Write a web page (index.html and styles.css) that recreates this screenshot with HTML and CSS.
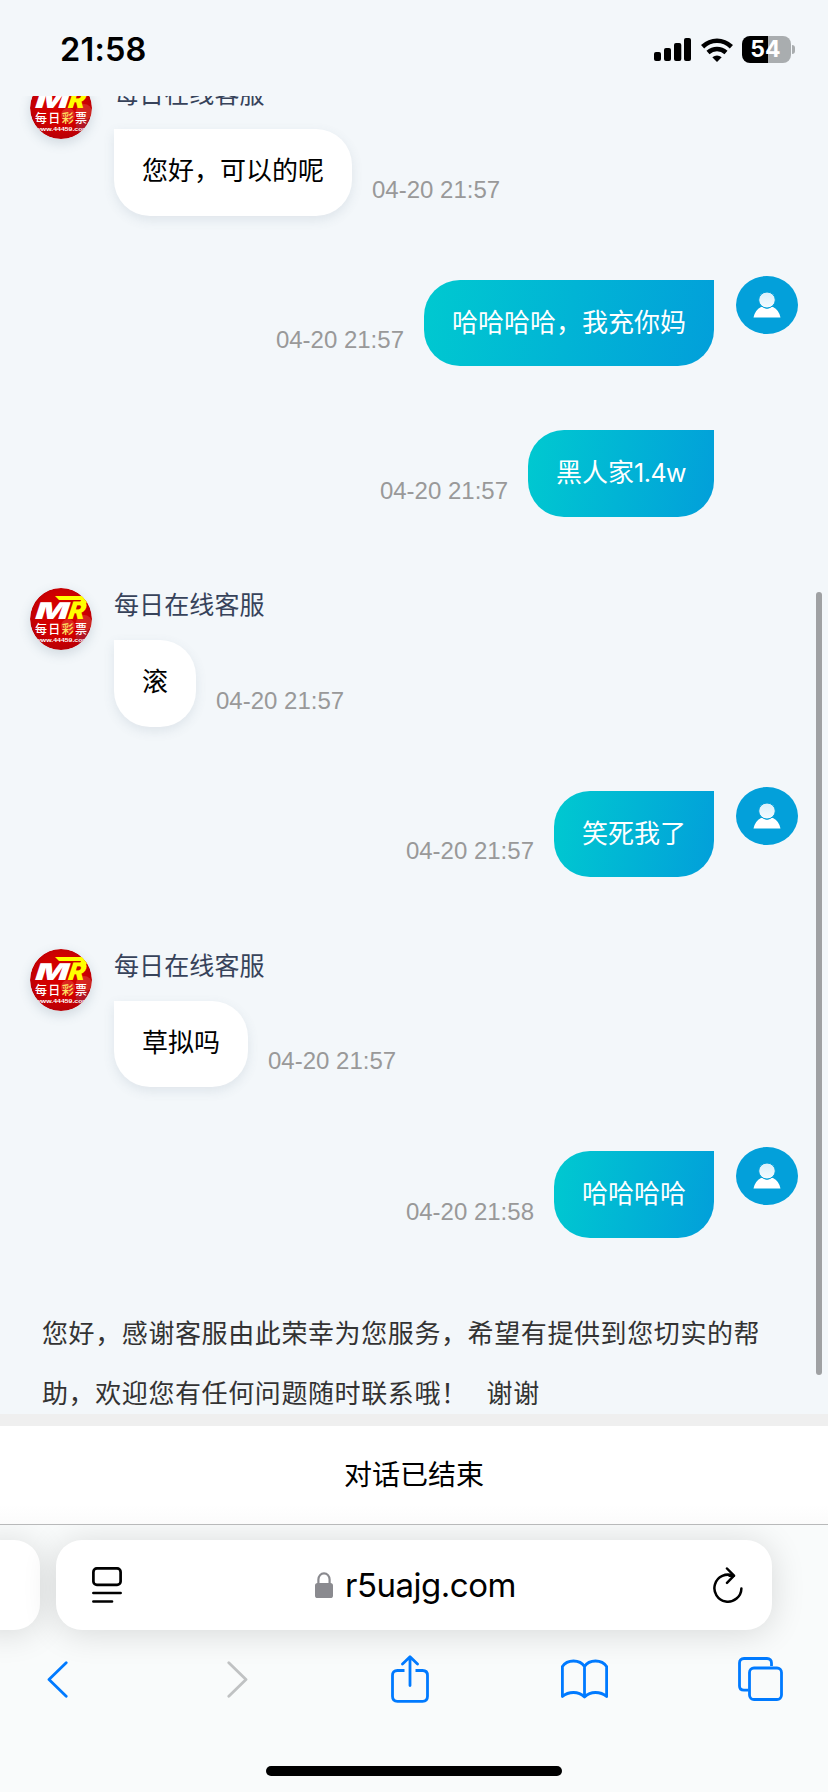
FILE: index.html
```html
<!DOCTYPE html>
<html lang="zh-CN">
<head>
<meta charset="utf-8">
<title>每日在线客服</title>
<link rel="stylesheet" href="styles.css">
</head>
<body>
<svg class="defs" width="0" height="0" aria-hidden="true">
  <defs>
    <radialGradient id="red" cx="50%" cy="45%" r="60%">
      <stop offset="0" stop-color="#d80000"/>
      <stop offset="0.6" stop-color="#d00000"/>
      <stop offset="1" stop-color="#b00008"/>
    </radialGradient>
    <linearGradient id="head" x1="0" y1="0" x2="0" y2="1">
      <stop offset="0" stop-color="#d9effa"/>
      <stop offset="1" stop-color="#f4fbff"/>
    </linearGradient>
    <clipPath id="disc"><circle cx="31" cy="31" r="31"/></clipPath>
    <symbol id="brand" viewBox="0 0 62 62">
      <g clip-path="url(#disc)">
        <rect width="62" height="62" fill="url(#red)"/>
        <circle cx="38" cy="38" r="7" fill="#e8604f" opacity=".4"/>
        <circle cx="54" cy="35" r="8" fill="#e86a5a" opacity=".35"/>
        <circle cx="54" cy="49" r="8" fill="#a03050" opacity=".45"/>
        <text class="mark" transform="translate(36.500 31) skewX(-18) scale(1.050 1)" font-size="24" fill="#ff0">R</text>
        <path d="M25 8H52Q60 9 57 14L55 17H49L51 12H29Z" fill="#ff0"/>
        <text class="mark" transform="translate(3.500 31) skewX(-18) scale(1.520 1)" font-size="23" fill="#fff">M</text>
        <text class="cjk" x="5" y="46" font-size="12" textLength="52" fill="#fff">每日<tspan fill="#ffe060">彩</tspan>票</text>
        <text class="site" x="5.500" y="54" font-size="6.200" textLength="53" lengthAdjust="spacingAndGlyphs" fill="#fff">www.44459.com</text>
      </g>
    </symbol>
    <symbol id="user" viewBox="0 0 62 58">
      <ellipse cx="31" cy="29" rx="31" ry="29" fill="#03a0da"/>
      <path d="M17.500 41.500Q19 34 25 31H26.500Q31 34.500 35.500 31H37Q43 34 44.500 41.500Z" fill="#fff"/>
      <ellipse cx="31" cy="24" rx="8.300" ry="8" fill="url(#head)" stroke="#03a0da" stroke-width="1"/>
    </symbol>
  </defs>
</svg>

<div class="screen">
  <header class="status">
    <span class="clock">21:58</span>
    <div class="status-icons">
      <svg class="signal" width="37" height="24" viewBox="0 0 37 24"><rect x="0" y="14" width="7" height="9" rx="2"/><rect x="10" y="10" width="7" height="13" rx="2"/><rect x="20" y="5" width="7.300" height="18" rx="2"/><rect x="30" y="0" width="7" height="23" rx="2"/></svg>
      <svg class="wifi" width="32" height="24" viewBox="0 0 32 24" fill="none" stroke="#000" stroke-width="4.600"><path d="M1.600 8.700Q8 2.700 16 2.700T30.400 8.700"/><path d="M7 14.500Q11 11 16 11T25 14.500"/><path d="M16 24L11.300 19.300Q16 15.600 20.700 19.300Z" fill="#000" stroke="none"/></svg>
      <div class="battery"><span>54</span></div>
      <i class="nub"></i>
    </div>
  </header>

  <main class="chat">
    <div class="row agent first">
      <svg class="brand"><use href="#brand"/></svg>
      <div class="body"><div class="name">每日在线客服</div>
        <div class="line"><div class="bubble">您好，可以的呢</div><time>04-20 21:57</time></div></div>
    </div>
    <div class="row guest"><time>04-20 21:57</time><div class="bubble">哈哈哈哈，我充你妈</div><svg class="user"><use href="#user"/></svg></div>
    <div class="row guest"><time>04-20 21:57</time><div class="bubble">黑人家<span class="latin">1.4w</span></div><span class="user"></span></div>
    <div class="row agent">
      <svg class="brand"><use href="#brand"/></svg>
      <div class="body"><div class="name">每日在线客服</div>
        <div class="line"><div class="bubble">滚</div><time>04-20 21:57</time></div></div>
    </div>
    <div class="row guest"><time>04-20 21:57</time><div class="bubble">笑死我了</div><svg class="user"><use href="#user"/></svg></div>
    <div class="row agent">
      <svg class="brand"><use href="#brand"/></svg>
      <div class="body"><div class="name">每日在线客服</div>
        <div class="line"><div class="bubble">草拟吗</div><time>04-20 21:57</time></div></div>
    </div>
    <div class="row guest"><time>04-20 21:58</time><div class="bubble">哈哈哈哈</div><svg class="user"><use href="#user"/></svg></div>
    <p class="notice">您好，感谢客服由此荣幸为您服务，希望有提供到您切实的帮<br>助，欢迎您有任何问题随时联系哦！<span class="thanks">谢谢</span></p>
    <i class="scrollbar"></i>
  </main>

  <div class="ended">对话已结束</div>

  <footer class="browser">
    <div class="tabs">
      <div class="prev-tab"></div>
      <div class="address">
        <svg width="30" height="36" viewBox="0 0 30 36" fill="none" stroke="#000" stroke-width="2.700" stroke-linecap="round"><rect x="1.400" y="1.400" width="27.200" height="16.500" rx="3.500"/><path d="M1.400 26H28.600M1.400 34.500H20"/></svg>
        <div class="host">
          <svg width="18" height="26" viewBox="0 0 18 26"><path d="M3.400 12V7.500a5.600 6.200 0 0 1 11.200 0V12" fill="none" stroke="#8a8a8f" stroke-width="2.200"/><rect y="11" width="18" height="15" rx="2.600" fill="#8a8a8f"/></svg>
          <span>r5uajg.com</span>
        </div>
        <svg width="30" height="37" viewBox="0 0 30 37" fill="none" stroke="#000" stroke-width="2.500" stroke-linecap="round" stroke-linejoin="round"><path d="M28.400 21.500A13.500 13.500 0 1 1 20.500 8.900"/><path d="M14 1.500L21 8.700L14 15.800M21 8.700H16.500"/></svg>
      </div>
    </div>
    <nav class="tools">
      <svg width="21" height="37" viewBox="0 0 21 37"><path d="M19.200 1.800L2 18.500L19.200 35.200"/></svg>
      <svg class="off" width="21" height="37" viewBox="0 0 21 37"><path d="M1.800 1.800L19 18.500L1.800 35.200"/></svg>
      <svg width="38" height="48" viewBox="0 0 38 48"><path d="M13.500 15.500H6.500Q1.500 15.500 1.500 20.500V41.300Q1.500 46.300 6.500 46.300H31.500Q36.500 46.300 36.500 41.300V20.500Q36.500 15.500 31.500 15.500H24.500" stroke-linecap="butt"/><path d="M19 30.500V2M11.500 9L19 1.800L26.500 9"/></svg>
      <svg width="47" height="40" viewBox="0 0 47 40"><path d="M23.500 37.500V7.500Q20 2 12.500 2T1.400 7.500V37.500Q6 33.500 12.500 33.500T23.500 38Q28 33.500 34.500 33.500T45.600 37.500V7.500Q42 2 34.500 2T23.500 7.500"/></svg>
      <svg width="45" height="44" viewBox="0 0 45 44"><path d="M33.500 9V6Q33.500 1.500 29 1.500H6Q1.500 1.500 1.500 6V29Q1.500 33.200 6 33.200H10.500" stroke-linecap="butt"/><rect x="11.500" y="11" width="32" height="31.500" rx="4.500"/></svg>
    </nav>
    <div class="home"></div>
  </footer>
</div>
</body>
</html>
```
FILE: styles.css
```css
* { box-sizing: border-box; }
body { margin: 0; background: #f3f7fa; }
svg { display: block; flex: none; }
.defs { position: absolute; }

.screen {
  width: 828px;
  height: 1792px;
  display: flex;
  flex-direction: column;
  overflow: hidden;
  font-family: "Liberation Sans", "Noto Sans CJK SC", sans-serif;
}

/* Status bar */
.status {
  height: 96px;
  flex: none;
  display: flex;
  justify-content: space-between;
  align-items: center;
  padding: 3px 33px 0 60px;
}
.clock { font: 600 32.5px/40px Inter, sans-serif; padding-top: 1px; letter-spacing: .2px; }
.status-icons { display: flex; align-items: center; }
.wifi { margin: 0 9px 0 10px; }
.battery {
  width: 49px;
  height: 27px;
  border-radius: 8px;
  background: linear-gradient(90deg, #000 0 26px, #a9adaf 26px);
  color: #fff;
  font: 700 23px/27px Inter, sans-serif;
  text-align: center;
  padding-right: 2px;
}
.nub { width: 3px; height: 9px; margin-left: 1px; border-radius: 0 4px 4px 0; background: #a9adaf; }

/* Conversation */
.chat { position: relative; height: 1318px; flex: none; overflow: hidden; }
.row { display: flex; margin-top: 64px; }
.agent { margin-top: 71.8px; padding-left: 30px; }
.agent.first { margin-top: -18.6px; }
.guest { justify-content: flex-end; padding-right: 30px; }
.brand { width: 62px; height: 62px; border-radius: 50%; box-shadow: 0 4px 12px rgba(70, 100, 120, .2); }
.body { margin-left: 22px; }
.name { height: 52px; padding-top: 1px; font-size: 25px; letter-spacing: .1px; line-height: 32px; color: #37435a; }
.line { display: flex; }
.bubble {
  height: 86.4px;
  padding: 0 28px;
  font-size: 26px;
  line-height: 85px;
  white-space: nowrap;
}
.agent .bubble {
  background: #fff;
  color: #000;
  border-radius: 0 36px 36px 36px;
  box-shadow: 0 4px 12px rgba(70, 100, 120, .12);
}
.guest .bubble {
  background: linear-gradient(100deg, #00c9d0, #029fda);
  color: #fff;
  line-height: 86px;
  border-radius: 36px 0 36px 36px;
}
.latin { font-family: Inter, sans-serif; font-size: 25px; letter-spacing: -.5px; }
time { align-self: flex-end; margin: 0 20px 12px; font-size: 24px; line-height: 28px; color: #999; white-space: nowrap; }
.user { width: 62px; height: 58px; margin: -4px 0 0 22px; flex: none; }
.mark { font-family: Inter, sans-serif; font-weight: 900; }
.cjk { font-family: "Noto Sans CJK SC", sans-serif; font-weight: 500; }
.site { font-family: "Liberation Sans", sans-serif; font-weight: 700; }
.notice {
  margin: 66px 0 0 42px;
  font-size: 26px;
  letter-spacing: .6px;
  line-height: 60px;
  color: #333;
  white-space: nowrap;
}
.thanks { margin-left: 19px; }
.scrollbar { position: absolute; left: 816px; top: 496px; width: 6px; height: 783px; border-radius: 3px; background: #9fa1a3; }

.ended {
  height: 110px;
  flex: none;
  border-top: 12px solid #efefef;
  background: linear-gradient(#fff 80%, #fbfbfb);
  text-align: center;
  font-size: 28px;
  line-height: 100px;
}

/* Browser controls */
.browser {
  height: 268px;
  flex: none;
  display: flex;
  flex-direction: column;
  background: #f9fbfb;
  border-top: 1px solid #b8b9ba;
  overflow: hidden;
}
.tabs { display: flex; gap: 16px; padding-top: 15px; }
.prev-tab { width: 68px; margin-left: -28px; }
.prev-tab, .address { height: 90px; border-radius: 26px; background: #fff; box-shadow: 0 3px 34px rgba(0, 0, 0, .14); }
.address { width: 716px; display: flex; align-items: center; justify-content: space-between; padding: 0 29px 0 36px; }
.host { display: flex; align-items: center; gap: 12px; margin-right: 4px; font: 400 33px/40px Inter, sans-serif; letter-spacing: -.5px; }
.tools { display: grid; grid-template-columns: 180px 164px 170px 177px 45px; align-items: center; height: 48px; margin-top: 25px; padding-left: 47px; fill: none; stroke: #007aff; stroke-width: 2.8; stroke-linecap: round; stroke-linejoin: round; }
.off { stroke: #c0c2c3; }
.home { width: 296px; height: 10px; margin: 63px auto 0; border-radius: 5px; background: #000; }
```
